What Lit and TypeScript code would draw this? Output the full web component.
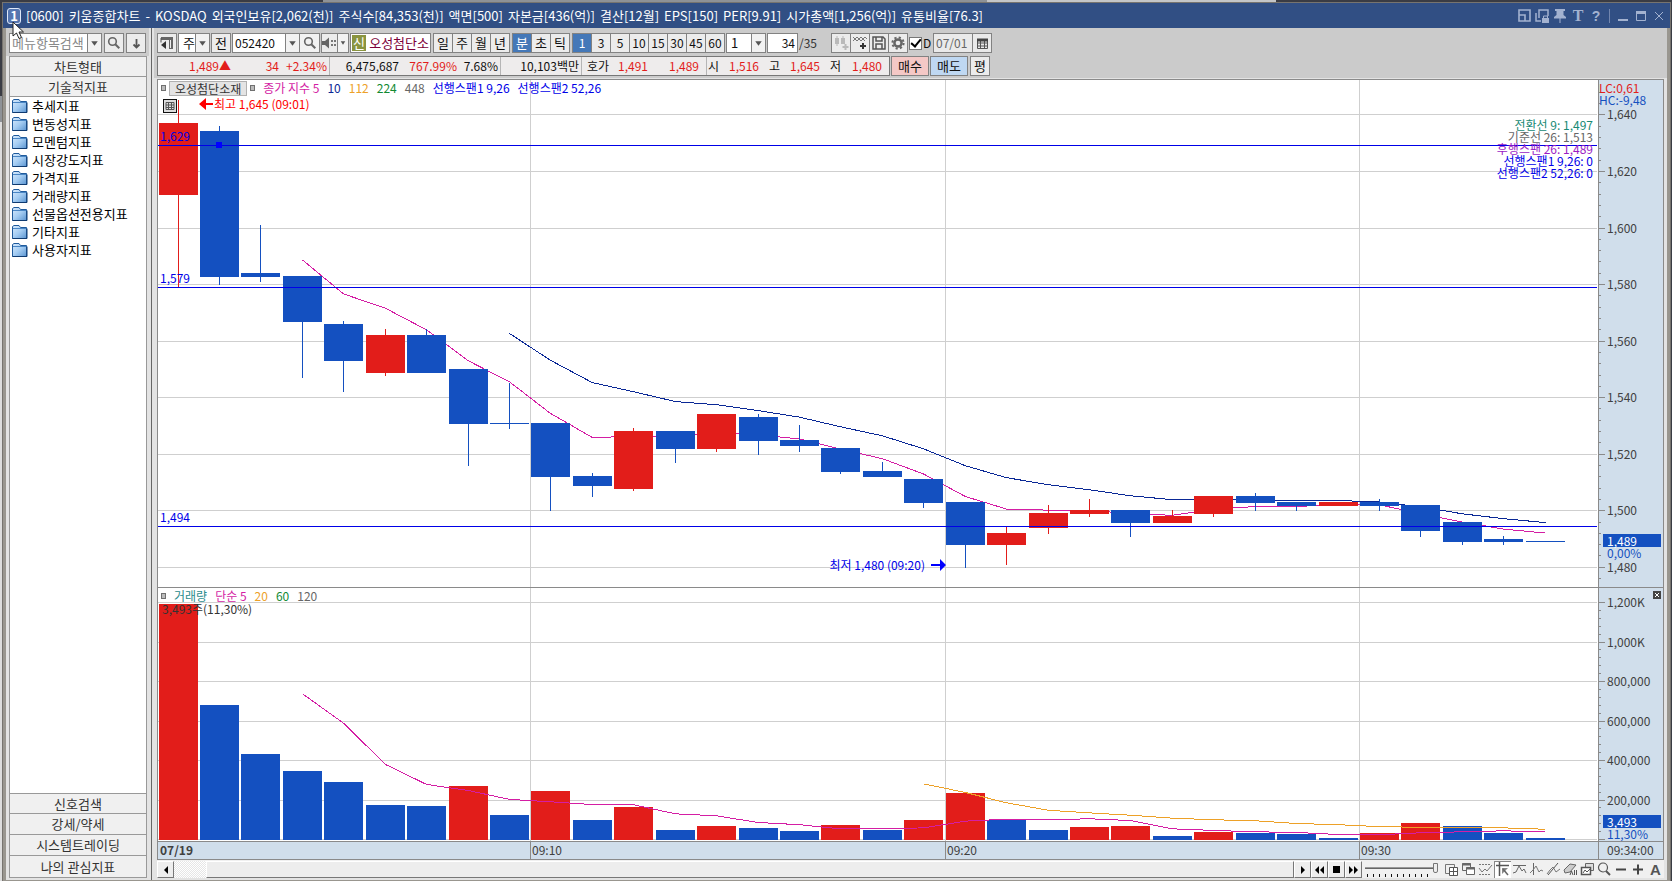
import { LitElement, html, svg, css } from "lit";
import { customElement, state } from "lit/decorators.js";
import { classMap } from "lit/directives/class-map.js";

const RED = "#e21d1a";
const BLUE = "#1450c0";
const MAGENTA = "#d41ea4";
const NAVY = "#0a2896";
const ORANGE = "#eda128";

const base = css`
  * { box-sizing: border-box; }
  button, input, select {
    font: inherit;
    color: inherit;
    margin: 0;
    padding: 0;
    border: 0;
    border-radius: 0;
    background: none;
    min-width: 0;
  }
  svg { display: block; flex: none; }
`;

/* open, high, low, close, volume in thousands */
type Bar = [number, number, number, number, number];
const bars: Bar[] = [
  [1612, 1645, 1579, 1637, 1195], [1634, 1636, 1580, 1583, 684], [1584, 1601, 1581, 1583, 436],
  [1583, 1583, 1547, 1567, 350], [1566, 1567, 1542, 1553, 294], [1549, 1564, 1548, 1562, 177],
  [1562, 1564, 1549, 1549, 172], [1550, 1550, 1516, 1531, 274], [1531, 1545, 1529, 1531, 127],
  [1531, 1531, 1500, 1512, 248], [1512, 1513, 1505, 1509, 101], [1508, 1529, 1507, 1528, 167],
  [1528, 1528, 1517, 1522, 51], [1522, 1534, 1521, 1534, 71], [1533, 1534, 1520, 1525, 61],
  [1525, 1530, 1521, 1523, 46], [1522, 1522, 1513, 1514, 76], [1514, 1517, 1512, 1512, 51],
  [1511, 1511, 1501, 1503, 101], [1503, 1503, 1480, 1488, 238], [1488, 1494, 1481, 1492, 101],
  [1494, 1502, 1492, 1499, 51], [1499, 1504, 1498, 1500, 66], [1500, 1500, 1491, 1496, 71],
  [1496, 1500, 1496, 1498, 20], [1499, 1505, 1498, 1505, 41], [1505, 1506, 1500, 1503, 35],
  [1503, 1503, 1500, 1502, 30], [1502, 1503, 1502, 1503, 10], [1503, 1504, 1500, 1502, 35],
  [1502, 1502, 1491, 1493, 86], [1496, 1496, 1488, 1489, 71], [1490, 1491, 1488, 1489, 35],
  [1489, 1489, 1489, 1489, 10],
];
const volumeUp = new Set([0, 7, 9, 11, 13, 16, 18, 19, 22, 23, 25, 29, 30]);

const priceMa5 = [1588.7, 1576.7, 1571.6, 1564, 1553, 1545.6, 1534.4, 1525.9, 1526.3, 1526.2, 1527.9,
  1526.8, 1525.4, 1521.8, 1518.4, 1513, 1505, 1500.6, 1500.2, 1500.2, 1498.9, 1498.4, 1500.5, 1501.5,
  1501.5, 1502.2, 1502.1, 1498.9, 1496, 1493.5, 1492.1];
const priceMa10 = [1562.7, 1553.2, 1545.3, 1542.1, 1538.6, 1537.5, 1535.4, 1533.1, 1529.7, 1526.5, 1521.9,
  1515.9, 1511.7, 1509.2, 1507.4, 1505.3, 1503.9, 1504.1, 1503.7, 1503.6, 1503.6, 1503.1, 1501.4,
  1498.9, 1497.2, 1495.8];
const volumeMa5 = [743, 594, 385, 284, 253, 208, 196, 182, 181, 135, 125, 91, 80, 59, 59, 64, 98, 108, 105,
  110, 101, 59, 51, 44, 41, 30, 29, 39, 44, 49, 44];
const volumeMa20 = [287, 243, 191, 153, 140, 128, 113, 105, 100, 86, 80, 70, 67, 64, 64, 57];

const levels = [
  { price: 1629.2, label: "1,629" },
  { price: 1579, label: "1,579" },
  { price: 1494.4, label: "1,494" },
];
const times = [{ at: 9, label: "09:10" }, { at: 19, label: "09:20" }, { at: 29, label: "09:30" }];

@customElement("stock-chart")
class StockChart extends LitElement {
  @state() private w = 1505;
  @state() private h = 779;
  private observer?: ResizeObserver;

  static styles = [base, css`
    :host {
      position: relative;
      display: grid;
      grid-template: minmax(0, 1fr) / minmax(0, 1fr);
      flex: 1;
      min-height: 0;
      border: 1px solid #8a8a8a;
      background: #fff;
      font-size: 12px;
    }
    .canvas { width: 100%; height: 100%; overflow: hidden; }
    .canvas text { dominant-baseline: central; }
    .crisp { shape-rendering: crispEdges; }
    .tick { fill: #404040; }
    .bold { font-weight: 700; }
    .legend { position: absolute; left: 3px; display: flex; align-items: center; gap: 8px; height: 16px; line-height: 16px; white-space: nowrap; }
    .legend.price { top: 0; }
    .legend .mark { width: 5px; height: 6px; border: 1px solid #707070; background: #bbb; }
    .legend .name { height: 15px; line-height: 13px; padding: 0 5px; margin: 0 -5px; border: 1px solid #b0b0b0; background: #e4e4e4; color: #333; }
    .tool { position: absolute; left: 5px; top: 19px; width: 14px; height: 14px; border: 1px solid #111; background: #ddd; }
    .readout { position: absolute; right: 70px; top: 39px; text-align: right; line-height: 12px; }
    .close { position: absolute; right: 2px; width: 8px; height: 8px; background: #444; }
    .c5 { color: #d41ea4; } .c10 { color: #0a2896; } .c112 { color: #eda128; } .c224 { color: #128a32; }
    .c448 { color: #666; } .span { color: #0000e8; } .vol { color: #2a8c8c; } .conv { color: #178a74; } .lag { color: #9a1cc4; }
  `];

  connectedCallback() {
    super.connectedCallback();
    this.observer = new ResizeObserver(() => {
      if (this.clientWidth && this.clientHeight) {
        this.w = this.clientWidth;
        this.h = this.clientHeight;
      }
    });
    this.observer.observe(this);
  }

  disconnectedCallback() {
    super.disconnectedCallback();
    this.observer?.disconnect();
  }

  render() {
    const { w, h } = this;
    const plot = w - 65;
    const timeTop = h - 18;
    const split = Math.round((timeTop * 507) / 761);
    const step = plot / 34.757;
    const body = Math.floor(step * 0.95);
    const half = Math.floor(body / 2);
    const x = (i: number) => Math.floor(1 + step * i);
    const unit = (split / 507) * 2.827;
    const y = (p: number) => (split * 34.95) / 507 + (1640 - p) * unit;
    const yr = (p: number) => Math.floor(y(p));
    const floor = timeTop - 1;
    const vUnit = ((timeTop - split) / 254) * 0.1975;
    const vy = (v: number) => Math.round(floor - v * vUnit);
    const path = (values: number[], from: number, f: (v: number) => number) =>
      values.map((v, k) => `${x(from + k) + half + 0.5},${f(v)}`).join(" ");
    const prices = [1640, 1620, 1600, 1580, 1560, 1540, 1520, 1500, 1480];
    const volumes: [number, string][] = [[1200, "1,200K"], [1000, "1,000K"], [800, "800,000"], [600, "600,000"], [400, "400,000"], [200, "200,000"]];
    const minorPrices = Array.from({ length: 44 }, (_, k) => 1648 - k * 4);
    const minorVolumes = Array.from({ length: 31 }, (_, k) => k * 40);

    return html`
      <svg class="canvas" role="img" aria-label="오성첨단소재 1분 차트">
        <g class="crisp">
          <rect x=${plot} y="0" width="65" height=${h} fill="#d0deeb"></rect>
          <rect x="0" y=${timeTop} width=${w} height="18" fill="#d0deeb"></rect>
          ${prices.map((p) => svg`<rect x="0" y=${yr(p)} width=${plot - 1} height="1" fill="#cfcfcf"/>`)}
          ${[0, ...volumes.map((v) => v[0])].map((v) => svg`<rect x="0" y=${vy(v) - 1} width=${plot - 1} height="1" fill="#cfcfcf"/>`)}
          ${times.map((t) => svg`<rect x=${x(t.at) - 1} y="0" width="1" height=${timeTop} fill="#cfcfcf"/>`)}
          <polyline points=${path(priceMa5, 3, y)} fill="none" stroke=${MAGENTA}></polyline>
          <polyline points=${path(priceMa10, 8, y)} fill="none" stroke=${NAVY}></polyline>
          ${bars.map(([o, hi, lo, c], i) => {
            const color = c > o ? RED : BLUE;
            const top = yr(Math.max(o, c));
            return svg`
              <rect x=${x(i) + half} y=${yr(hi)} width="1" height=${yr(lo) - yr(hi) + 1} fill=${color}/>
              <rect x=${x(i)} y=${top} width=${body} height=${yr(Math.min(o, c)) - top + 1} fill=${color}/>`;
          })}
          ${levels.map((l) => svg`<rect x="0" y=${yr(l.price)} width=${plot - 1} height="1" fill="#0000e8"/>`)}
          <rect x=${x(1) + half - 3} y=${yr(1629.2) - 3} width="6" height="6" fill="#0000ff"></rect>
          ${bars.map((b, i) => svg`<rect x=${x(i)} y=${vy(b[4])} width=${body} height=${floor - vy(b[4])} fill=${volumeUp.has(i) ? RED : BLUE}/>`)}
          <polyline points=${path(volumeMa5, 3, (v) => floor - v * vUnit + 0.5)} fill="none" stroke=${MAGENTA}></polyline>
          <polyline points=${path(volumeMa20, 18, (v) => floor - v * vUnit + 0.5)} fill="none" stroke=${ORANGE}></polyline>
          <rect x="0" y=${split} width=${w} height="1" fill="#8a8a8a"></rect>
          <rect x="0" y=${timeTop} width=${w} height="1" fill="#8a8a8a"></rect>
          <rect x=${plot} y="0" width="1" height=${h} fill="#8a8a8a"></rect>
          ${times.map((t) => svg`<rect x=${x(t.at) - 1} y=${timeTop} width="1" height="18" fill="#8a8a8a"/>`)}
          ${minorPrices.map((p) => svg`<rect x=${plot} y=${yr(p)} width=${p % 20 ? 3 : 7} height="1" fill="#8a8a8a"/>`)}
          ${minorVolumes.map((v) => svg`<rect x=${plot} y=${vy(v) - 1} width=${v % 200 ? 3 : 7} height="1" fill="#8a8a8a"/>`)}
          <rect x=${plot + 5} y=${yr(1489) - 7} width="58" height="13" fill=${BLUE}></rect>
          <rect x=${plot + 5} y=${timeTop - 26} width="58" height="13" fill=${BLUE}></rect>
        </g>
        ${levels.map((l) => svg`<text x="2" y=${yr(l.price) - 10} fill="#0000e8">${l.label}</text>`)}
        ${prices.map((p) => svg`<text class="tick" x=${plot + 9} y=${yr(p) - 1}>${p.toLocaleString("en-US")}</text>`)}
        ${volumes.map(([v, label]) => svg`<text class="tick" x=${plot + 9} y=${vy(v) - 2}>${label}</text>`)}
        <text x=${plot + 1} y="7" fill=${RED}>LC:0,61</text>
        <text x=${plot + 1} y="19" fill=${BLUE}>HC:-9,48</text>
        <text x=${plot + 9} y=${yr(1489) - 1} fill="#fff">1,489</text>
        <text x=${plot + 9} y=${yr(1489) + 11} fill=${BLUE}>0,00%</text>
        <text x=${plot + 9} y=${timeTop - 20} fill="#fff">3,493</text>
        <text x=${plot + 9} y=${timeTop - 8} fill=${BLUE}>11,30%</text>
        <text class="tick bold" x="2" y=${timeTop + 8}>07/19</text>
        ${times.map((t) => svg`<text class="tick" x=${x(t.at) + 1} y=${timeTop + 8}>${t.label}</text>`)}
        <text class="tick" x=${plot + 9} y=${timeTop + 8}>09:34:00</text>
        <path d="M41 24l7-6v5h7v2h-7v5z" fill="#ff0000"></path>
        <text x="56" y="23" fill="#ff0000">최고 1,645 (09:01)</text>
        <text x=${x(19) - 21} y=${yr(1481)} fill="#0000e8" text-anchor="end">최저 1,480 (09:20)</text>
        <path d="M${x(19) - 15} ${yr(1481)}h9v-5l6 6-6 6v-5h-9z" fill="#0000ff"></path>
        <text x="4" y=${split + 21} fill="#333">3,493주(11,30%)</text>
      </svg>
      <div class="legend price">
        <i class="mark"></i><span class="name">오성첨단소재</span><i class="mark"></i>
        <span class="c5">종가 지수 5</span><span class="c10">10</span><span class="c112">112</span>
        <span class="c224">224</span><span class="c448">448</span>
        <span class="span">선행스팬1 9,26</span><span class="span">선행스팬2 52,26</span>
      </div>
      <button class="tool" aria-label="데이터 표">
        <svg width="12" height="12" viewBox="0 0 12 12"><path d="M2 2.5h8v7H2zM2 5h8M2 7.5h8M4.5 2v8M7.5 2v8" fill="none" stroke="#555"/></svg>
      </button>
      <div class="readout">
        <div class="conv">전환선 9: 1,497</div>
        <div class="c448">기준선 26: 1,513</div>
        <div class="lag">후행스팬 26: 1,489</div>
        <div class="span">선행스팬1 9,26: 0</div>
        <div class="span">선행스팬2 52,26: 0</div>
      </div>
      <div class="legend" style="top:${split + 1}px">
        <i class="mark"></i><span class="vol">거래량</span><span class="c5">단순 5</span>
        <span class="c112">20</span><span class="c224">60</span><span class="c448">120</span>
      </div>
      <button class="close" style="top:${split + 4}px" aria-label="거래량 닫기">
        <svg width="8" height="8" viewBox="0 0 8 8"><path d="M2 2l4 4M6 2l-4 4" stroke="#fff"/></svg>
      </button>
    `;
  }
}

const lens = html`<svg width="14" height="14" viewBox="0 0 14 14"><circle cx="5.5" cy="5.5" r="3.8" fill="none" stroke="#666" stroke-width="1.6"/><path d="M8.3 8.3l4 4" stroke="#666" stroke-width="2"/></svg>`;
const arrow = html`<svg class="arrow" width="14" height="18" viewBox="0 0 14 18" aria-hidden="true"><path d="M3.500 7h7l-3.500 5z" fill="#555"/></svg>`;
const folder = html`<svg width="16" height="14" viewBox="0 0 16 14">
  <defs><linearGradient id="fold" x1="0" y1="0" x2="1" y2="1"><stop offset="0" stop-color="#d8eafc"/><stop offset=".5" stop-color="#a4ccf2"/><stop offset="1" stop-color="#5a94d0"/></linearGradient></defs>
  <path d="M.5 13.5v-12L2 .5h5l1.5 2h6v11z" fill="url(#fold)" stroke="#1f5a9c"/><path d="M1 3.5h13.5" stroke="#4a86c4"/><path d="M.5 13.5h14.5v-10" fill="none" stroke="#0f3a70"/></svg>`;

const titleParts = ["[0600]", "키움종합차트", "-", "KOSDAQ", "외국인보유[2,062(천)]", "주식수[84,353(천)]", "액면[500]",
  "자본금[436(억)]", "결산[12월]", "EPS[150]", "PER[9.91]", "시가총액[1,256(억)]", "유통비율[76.3]"];

const chartTools = [
  ["영역 추가", svg`<path d="M1.500 2.500h9v9h-9z" fill="none" stroke="#777"/><path d="M5.500 5.500h8v8h-8z" fill="#fff" stroke="#555"/><path d="M9.500 5v9M5 9.500h9" stroke="#555"/>`],
  ["영역 겹침", svg`<path d="M1.500 1.500h8v7h-8z" fill="#eee" stroke="#666"/><path d="M1 2.500h9" stroke="#666" stroke-width="2"/><path d="M5.500 5.500h8v7h-8z" fill="#fff" stroke="#666"/><path d="M5 6.500h9" stroke="#666" stroke-width="2"/>`],
  ["구간", svg`<path d="M1 2.500h12M1 12.500h12" stroke="#777" stroke-dasharray="2 1"/><path d="M1 6l3 4 3-3 2 2 5-6" fill="none" stroke="#777"/>`],
  ["십자선", svg`<path d="M1 3.500h13M4.500 0v14" stroke="#555" stroke-width="1.500"/><path d="M7 6v6l6-6z" fill="#888"/><path d="M8 7l5 6" stroke="#666" stroke-width="1.500"/>`],
  ["수평선", svg`<path d="M1 3.500h13" stroke="#666"/><path d="M1 11l3-1 3-6 3 5 2-2 2 4" fill="none" stroke="#666"/>`],
  ["수직선", svg`<path d="M4.500 1v12" stroke="#666"/><path d="M1 11l3-3 3-4 3 6 2-2 2 1" fill="none" stroke="#777"/>`],
  ["추세선", svg`<path d="M2 13L12 1" stroke="#555"/><path d="M1 12l3-4 3-3 3 5 4-3" fill="none" stroke="#777"/>`],
  ["전체 삭제", svg`<path d="M1 8l6-6 6 1-6 7-5 1z" fill="#ccc" stroke="#666"/><path d="M7 13l1.500-4 1.500 4M11.500 8v5M13.500 8v5" stroke="#555" fill="none"/>`],
  ["차트 복사", svg`<path d="M5.500 1.500h8v7h-8z" fill="#ddd" stroke="#666"/><path d="M1.500 5.500h9v7h-9z" fill="#fff" stroke="#555" stroke-width="1.500"/><path d="M3 11l2-3 2 2 3-3" fill="none" stroke="#555"/>`],
  ["돋보기", svg`<circle cx="6" cy="5.500" r="4.500" fill="none" stroke="#555" stroke-width="1.200"/><path d="M9 9l4 4" stroke="#555" stroke-width="2"/>`],
  ["축소", svg`<path d="M2 7.500h10" stroke="#444" stroke-width="2"/>`],
  ["확대", svg`<path d="M2 7.500h10M7 2.500v10" stroke="#444" stroke-width="2"/>`],
] as const;

@customElement("app-root")
class AppRoot extends LitElement {
  @state() private period = "분";
  @state() private minute = "1";

  static styles = [base, css`
    :host {
      display: flex;
      height: 100vh;
      min-height: 480px;
      padding: 2px 1px 0 2px;
      font: 13px/16px "Noto Sans CJK KR", sans-serif;
      color: #111;
      background:
        linear-gradient(90deg, #3a3c44 0 323px, #8e9297 323px 987px, #c4c6c8 987px 1276px, #3a3c44 1276px) top / 100% 2px no-repeat,
        linear-gradient(#3a3c44 0 96px, #8e9297 96px 122px, #ddd 122px) left / 2px 100% no-repeat,
        #3a3c44;
      box-sizing: border-box;
    }
    .window { flex: 1; min-width: 0; display: flex; flex-direction: column; border: 1px solid #77746f; border-bottom: 0; }

    .title { display: flex; align-items: center; height: 25px; padding: 0 2px 0 4px; background: #314f84; color: #fff; white-space: nowrap; }
    .badge { width: 14px; height: 16px; margin-right: 5px; border: 1px solid #dfe8f8; border-radius: 3px; background: #5676b0; font-weight: 700; line-height: 14px; text-align: center; }
    h1 { flex: 1; min-width: 0; overflow: hidden; display: flex; gap: 5px; margin: 0; font-size: 13px; line-height: 18px; font-weight: 400; }
    .wbtns { display: flex; color: #a3b2d0; }
    .wbtns button { width: 18px; height: 20px; display: grid; place-items: center; font: 700 16px/20px "Liberation Serif", serif; }
    .wbtns button.q { font-family: "Liberation Sans", sans-serif; font-size: 14px; }
    .wbtns .rule { width: 1px; height: 14px; margin: 3px 4px; background: #7286ae; }
    .cursor { position: absolute; left: 12px; top: 21px; }

    .body { flex: 1; min-height: 0; display: flex; background: #e3e3e3; border: solid #99968f; border-width: 0 3px 1px 3px; }
    aside { width: 146px; flex: none; display: flex; flex-direction: column; border-right: 1px solid #666; padding-bottom: 2px; }
    .find { display: flex; gap: 2px; height: 28px; padding: 5px 3px 3px 3px; margin-right: 2px; background: #cbcbcb; }
    .find .box { flex: 1; min-width: 0; }
    .box { display: flex; height: 20px; border: 1px solid #828282; background: #fff; }
    .box input { flex: 1; width: 0; padding-left: 2px; outline: 0; }
    .box select { flex: 1; appearance: none; padding-left: 4px; outline: 0; }
    .box input::placeholder { color: #888; opacity: 1; }
    .arrow { background: #f2f2f2; border-left: 1px solid #828282; }
    button.arrow { width: 20px; display: grid; place-items: center; }
    .btn { height: 20px; min-width: 20px; display: grid; place-items: center; border: 1px solid #828282; background: #ececec; }
    .stack { flex: 1; min-height: 0; display: flex; flex-direction: column; width: 138px; margin-left: 3px; border: 1px solid #999; background: #fff; }
    .fold { flex: none; height: 21px; border-bottom: 1px solid #999; background: #f0f0f0; color: #333; text-align: center; line-height: 18px; }
    .fold.head { height: 20px; }
    .fold.first { border-top: 1px solid #999; }
    .fold:last-child { border-bottom: 0; }
    ul { flex: 1; min-height: 0; overflow: hidden; margin: 0; padding: 0; list-style: none; }
    li a { display: flex; align-items: center; gap: 4px; height: 18px; padding-left: 2px; color: #000; text-decoration: none; white-space: nowrap; }

    main { flex: 1; min-width: 0; display: flex; flex-direction: column; padding: 0 3px 2px 2px; }
    .bars { height: 50px; padding: 5px 0 2px 3px; margin-right: -3px; background: #cbcbcb; }
    stock-chart, .foot { margin-left: 3px; }
    stock-chart { margin-top: 1px; }
    .row { display: flex; gap: 1px; height: 20px; white-space: nowrap; }
    .row + .row { margin-top: 3px; }
    .group { display: flex; margin-left: 1px; }
    .group .btn { width: 20px; margin-right: -1px; }
    .group .btn:last-child { margin-right: 0; }
    .btn.on { background: #4478b8; color: #fff; }
    .digits, .code, .num, .date, .total { font-size: 12px; }
    .code { width: 88px; }
    .narrow { width: 32px; }
    .speaker { width: 28px; }
    .speaker button { flex: 1; display: grid; place-items: center; background: #ececec; }
    .stock { width: 81px; gap: 3px; padding: 1px; color: #7c0038; line-height: 15px; overflow: hidden; }
    .stock b { width: 16px; background: #8a9440; color: #fff; font-weight: 400; text-align: center; }
    .count { width: 40px; }
    .num { width: 31px; }
    .num input { text-align: right; padding: 0 2px; }
    .total { width: 30px; line-height: 19px; color: #333; }
    .pale { opacity: .6; }
    .check { display: flex; align-items: center; gap: 1px; width: 23px; font-size: 12px; }
    .check input { appearance: none; width: 13px; height: 13px; border: 1px solid #777; background: #fff; flex: none; display: grid; place-items: center; }
    .check input:checked::after { content: ""; width: 4px; height: 8px; border: solid #000; border-width: 0 2px 2px 0; transform: rotate(40deg); margin-top: -2px; }
    .date { width: 59px; background: #eaeaea; color: #666; }
    .date button { width: 19px; border-left: 1px solid #828282; display: grid; place-items: center; }
    .quote {
      display: grid;
      grid-template-columns: 73px 48px 48px 72px 58px 41px 81px 30px 39px 51px 20px 40px 21px 40px 21px 41px;
      width: 733px; height: 20px; border: 1px solid #777; background: #eeecec; text-align: right; font-size: 12px; line-height: 18px;
    }
    .quote .cut { box-shadow: 2px 0 0 #eeecec, 3px 0 0 #b5b5b5; }
    .quote .far { box-shadow: 7px 0 0 #eeecec, 8px 0 0 #b5b5b5; }
    .quote .up { color: #e21d1a; }
    .buy, .sell { width: 38px; color: #111; }
    .buy { background: #f4c8c6; }
    .sell { background: #bfd8f2; }
    .rate { width: 20px; margin-left: 1px; }

    .foot { display: flex; height: 18px; padding-top: 1px; background: #f0f0f0; }
    .foot .sb { width: 17px; height: 17px; display: grid; place-items: center; border: 1px solid #fff; border-right-color: #777; border-bottom-color: #777; background: #eee; }
    .track { flex: 1; min-width: 40px; padding-left: 32px; background: repeating-conic-gradient(#fff 0 25%, #e6e6e6 0 50%) 0 0 / 2px 2px; }
    .thumb { height: 17px; border: 1px solid #fff; border-bottom-color: #777; border-right-color: #777; background: #ededed; }
    .speed { width: 81px; padding: 3px 3px 0; }
    .speed input { display: block; appearance: none; width: 73px; height: 8px; outline: 0; background: linear-gradient(#999 1px, #666 1px 2px, transparent 2px) 0 3px / 68px 2px no-repeat; }
    .speed input::-webkit-slider-thumb { appearance: none; width: 5px; height: 10px; border: 1px solid #777; border-radius: 0 0 2px 2px; background: #eee; }
    .speed i { display: block; height: 3px; margin: 2px 8px 0 2px; background: repeating-linear-gradient(90deg, #111 0 1px, transparent 1px 6px); }
    .tools { display: flex; }
    .tools button { width: 17px; height: 17px; display: grid; place-items: center; color: #555; font: 700 15px/17px "Liberation Sans", sans-serif; }
    .tools .on { background: #fff; box-shadow: inset 1px 1px #888; }
  `];

  private cell = (label: string, current: string, pick: (v: string) => void) => html`
    <button class=${classMap({ btn: true, on: label === current })} aria-pressed=${label === current} @click=${() => pick(label)}>${label}</button>`;

  render() {
    const setPeriod = (v: string) => { this.period = v; };
    const setMinute = (v: string) => { this.minute = v; };
    return html`
      <div class="window">
        <header class="title">
          <span class="badge">1</span>
          <h1>${titleParts.map((t) => html`<span>${t}</span>`)}</h1>
          <div class="wbtns">
            <button aria-label="크기 조절"><svg width="13" height="13" viewBox="0 0 13 13"><path d="M1 1h11v11H1zM1 6h6v6" fill="none" stroke="currentColor" stroke-width="1.600"/></svg></button>
            <button aria-label="화면 잠금"><svg width="14" height="14" viewBox="0 0 14 14"><path d="M4 9V1h9v6M1 4v8h5" fill="none" stroke="currentColor" stroke-width="1.500"/><path d="M7 9h7v5H7z" fill="currentColor"/><path d="M8.500 9V7h4v2" fill="none" stroke="currentColor"/></svg></button>
            <button aria-label="고정"><svg width="12" height="14" viewBox="0 0 12 14"><path d="M1 0h10v2H9.500v4L12 8v1.500H0V8l2.500-2V2H1zM5.500 9h1v5h-1z" fill="currentColor"/></svg></button>
            <button aria-label="글꼴">T</button>
            <button class="q" aria-label="도움말">?</button>
            <span class="rule"></span>
            <button aria-label="최소화"><svg width="12" height="12" viewBox="0 0 12 12"><path d="M1 10h10" stroke="currentColor" stroke-width="2"/></svg></button>
            <button aria-label="최대화"><svg width="12" height="12" viewBox="0 0 12 12"><path d="M1.500 1.500h9v9h-9z" fill="none" stroke="currentColor"/><path d="M1 2.500h10" stroke="currentColor" stroke-width="3"/></svg></button>
            <button aria-label="닫기"><svg width="12" height="12" viewBox="0 0 12 12"><path d="M2 2l8 8M10 2l-8 8" stroke="currentColor"/></svg></button>
          </div>
        </header>
        <div class="body">
          <aside>
            <div class="find">
              <div class="box"><input aria-label="메뉴항목검색" placeholder="메뉴항목검색" />${arrow}</div>
              <button class="btn" aria-label="검색">${lens}</button>
              <button class="btn" aria-label="아래로"><svg width="9" height="11" viewBox="0 0 9 11"><path d="M4.500 1v8M1.500 6.500l3 3 3-3" fill="none" stroke="#555" stroke-width="1.800"/></svg></button>
            </div>
            <nav class="stack">
              <button class="fold head">차트형태</button>
              <button class="fold head">기술적지표</button>
              <ul>
                ${["추세지표", "변동성지표", "모멘텀지표", "시장강도지표", "가격지표", "거래량지표", "선물옵션전용지표", "기타지표", "사용자지표"].map(
                  (t) => html`<li><a href="#">${folder}<span>${t}</span></a></li>`)}
              </ul>
              ${["신호검색", "강세/약세", "시스템트레이딩", "나의 관심지표"].map((t, i) => html`<button class=${classMap({ fold: true, first: i === 0 })}>${t}</button>`)}
            </nav>
          </aside>
          <main>
            <div class="bars">
              <div class="row">
                <button class="btn" aria-label="메뉴 숨기기"><svg width="14" height="14" viewBox="0 0 14 14"><path d="M1 1h12v12h-4V4H1z" fill="#666"/><path d="M6 5v8L1 9z" fill="#333"/><path d="M10.500 4v8" stroke="#eee"/><path d="M1 6.500V2" stroke="#555"/></svg></button>
                <div class="box narrow"><select aria-label="종목 구분"><option>주</option></select>${arrow}</div>
                <button class="btn">전</button>
                <div class="box code"><input aria-label="종목코드" value="052420" />${arrow}<button class="arrow" aria-label="종목 검색">${lens}</button></div>
                <div class="box speaker"><button aria-label="소리"><svg width="15" height="12" viewBox="0 0 15 12"><path d="M0 4h3l4-3.500v11L3 8H0z" fill="#666"/><path d="M9 4h2M9 8h2M12 4h2M12 8h2" stroke="#777" stroke-width="2"/></svg></button><svg class="arrow" width="11" height="18" viewBox="0 0 11 18"><path d="M3 7h5l-2.500 4z" fill="#555"/></svg></div>
                <div class="box stock"><b>신</b><span>오성첨단소</span></div>
                <div class="group">${["일", "주", "월", "년"].map((t) => this.cell(t, this.period, setPeriod))}</div>
                <div class="group">${["분", "초", "틱"].map((t) => this.cell(t, this.period, setPeriod))}</div>
                <div class="group digits">${["1", "3", "5", "10", "15", "30", "45", "60"].map((t) => this.cell(t, this.minute, setMinute))}</div>
                <div class="box count"><select aria-label="주기"><option>1</option></select>${arrow}</div>
                <div class="box num"><input aria-label="표시 봉 수" value="34" /></div>
                <span class="total">/35</span>
                <div class="group">
                  <button class="btn" aria-label="종목 추가"><svg class="pale" width="16" height="16" viewBox="0 0 16 16"><path d="M2 3h4v6H2zM8 3h4v6H8zM3.500 1h1v10h-1zM9.500 1h1v8h-1z" fill="#999"/><path d="M12.500 9v6M9.500 12h6" stroke="#999" stroke-width="2"/></svg></button>
                  <button class="btn" aria-label="지표 추가"><svg width="16" height="16" viewBox="0 0 16 16"><path d="M1 6l4-4 4 4 4-4 2 2M1 2l4 4 4-4 4 4" fill="none" stroke="#777"/><path d="M11 8v6M8 11h6" stroke="#333" stroke-width="2"/></svg></button>
                  <button class="btn" aria-label="저장"><svg width="14" height="14" viewBox="0 0 14 14"><path d="M1 1h10l2 2v10H1z" fill="none" stroke="#555" stroke-width="1.500"/><path d="M4 1v4h6V1M4 13V8h6v5" fill="none" stroke="#555" stroke-width="1.500"/></svg></button>
                  <button class="btn" aria-label="설정"><svg width="14" height="14" viewBox="0 0 14 14"><circle cx="7" cy="7" r="3.600" fill="none" stroke="#666" stroke-width="2.500"/><circle cx="7" cy="7" r="5.600" fill="none" stroke="#666" stroke-width="2" stroke-dasharray="2.200 2.200"/></svg></button>
                </div>
                <label class="check"><input type="checkbox" checked />D</label>
                <div class="box date"><input aria-label="날짜" value="07/01" /><button aria-label="달력"><svg width="13" height="13" viewBox="0 0 13 13"><path d="M1.500 2.500h10v9h-10zM1 6h11M1 9h11M4.500 4v8M8.500 4v8" fill="none" stroke="#555"/><path d="M1 3h11" stroke="#444" stroke-width="3"/></svg></button></div>
              </div>
              <div class="row">
                <div class="quote">
                  <span class="up">1,489▲</span><span class="up">34</span><span class="up cut">+2.34%</span>
                  <span>6,475,687</span><span class="up">767.99%</span><span class="cut">7.68%</span>
                  <span class="cut">10,103백만</span><span>호가</span><span class="up">1,491</span><span class="up far">1,489</span>
                  <span>시</span><span class="up">1,516</span><span>고</span><span class="up">1,645</span><span>저</span><span class="up">1,480</span>
                </div>
                <button class="btn buy">매수</button>
                <button class="btn sell">매도</button>
                <button class="btn rate">평</button>
              </div>
            </div>
            <stock-chart></stock-chart>
            <div class="foot">
              <button class="sb" aria-label="왼쪽"><svg width="8" height="8" viewBox="0 0 8 8"><path d="M6 0v8L2 4z"/></svg></button>
              <div class="track"><div class="thumb"></div></div>
              <button class="sb" aria-label="재생"><svg width="8" height="8" viewBox="0 0 8 8"><path d="M2 0v8l4-4z"/></svg></button>
              <button class="sb" aria-label="느리게"><svg width="9" height="8" viewBox="0 0 9 8"><path d="M4 0v8L0 4zM9 0v8L5 4z"/></svg></button>
              <button class="sb" aria-label="정지"><svg width="7" height="7" viewBox="0 0 7 7"><path d="M0 0h7v7H0z"/></svg></button>
              <button class="sb" aria-label="빠르게"><svg width="9" height="8" viewBox="0 0 9 8"><path d="M0 0v8l4-4zM5 0v8l4-4z"/></svg></button>
              <div class="speed"><input type="range" aria-label="재생 속도" min="0" max="11" value="11" /><i></i></div>
              <div class="tools">
                ${chartTools.map(([name, glyph], i) => html`<button class=${classMap({ on: i === 3 })} aria-label=${name}><svg width="15" height="15" viewBox="0 0 15 15">${glyph}</svg></button>`)}
                <button aria-label="자동">A</button>
              </div>
            </div>
          </main>
        </div>
      </div>
      <svg class="cursor" width="13" height="19" viewBox="0 0 13 19"><path d="M1 1v14l3.500-3 2.500 5.500 2.500-1-2.500-5.500h4.500z" fill="#fff" stroke="#222"/></svg>
    `;
  }
}
